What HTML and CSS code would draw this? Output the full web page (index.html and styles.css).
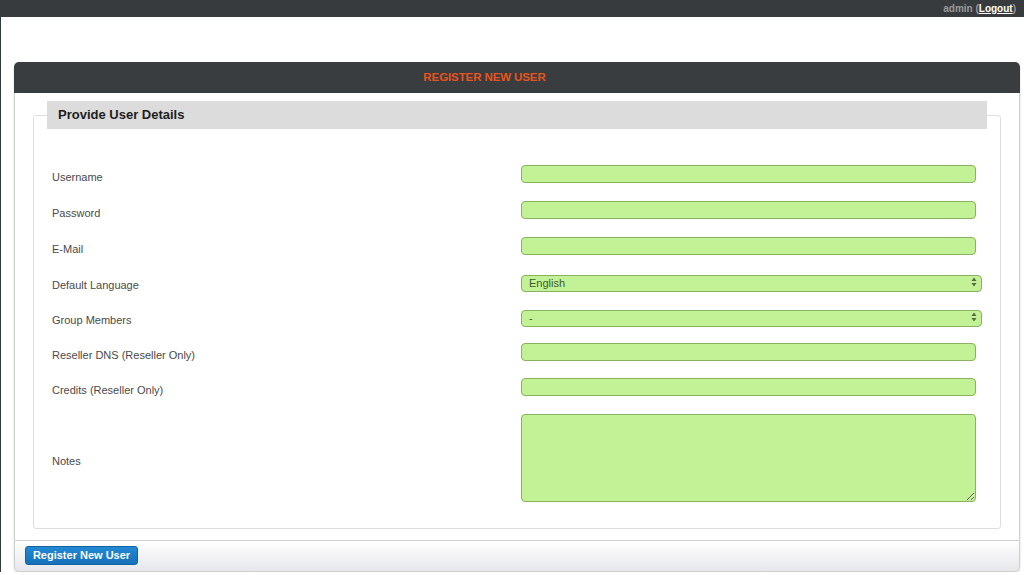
FILE: index.html
```html
<!DOCTYPE html>
<html lang="en">
<head>
  <meta charset="UTF-8">
  <meta name="viewport" content="width=device-width, initial-scale=1.0">
  <title>Register New User</title>
  <link rel="stylesheet" href="styles.css">
</head>
<body>

  <div class="topbar">
    <span class="user">admin (<a href="#">Logout</a>)</span>
  </div>

  <div class="page">
    <div class="panel">
      <div class="panel-head">REGISTER NEW USER</div>

      <div class="panel-body">
        <fieldset class="details">
          <legend>Provide User Details</legend>
          <div class="rows">
            <div class="row">
              <label>Username</label>
              <input type="text">
            </div>
            <div class="row">
              <label>Password</label>
              <input type="password">
            </div>
            <div class="row">
              <label>E-Mail</label>
              <input type="text">
            </div>
            <div class="row short">
              <label>Default Language</label>
              <div class="select-wrap">
                <select>
                  <option>English</option>
                </select>
                <svg class="arrows" width="6" height="10" viewBox="0 0 6 10"><path d="M3 0.5 L5.5 4 H0.5 Z M3 9.5 L5.5 6 H0.5 Z" fill="#556b44"/></svg>
              </div>
            </div>
            <div class="row short">
              <label>Group Members</label>
              <div class="select-wrap">
                <select>
                  <option>-</option>
                </select>
                <svg class="arrows" width="6" height="10" viewBox="0 0 6 10"><path d="M3 0.5 L5.5 4 H0.5 Z M3 9.5 L5.5 6 H0.5 Z" fill="#556b44"/></svg>
              </div>
            </div>
            <div class="row short">
              <label>Reseller DNS (Reseller Only)</label>
              <input type="text">
            </div>
            <div class="row">
              <label>Credits (Reseller Only)</label>
              <input type="text">
            </div>
            <div class="row notes">
              <label>Notes</label>
              <textarea></textarea>
            </div>
          </div>
        </fieldset>
      </div>

      <div class="panel-foot">
        <button>Register New User</button>
      </div>
    </div>
  </div>

</body>
</html>
```

FILE: styles.css
```css
body {
  font-family: "Liberation Sans", Arial, sans-serif;
  margin: 0;
  padding: 0;
  background-color: #fff;
}

.topbar {
  background-color: #383b3e;
  height: 17px;
  line-height: 17px;
  text-align: right;
  padding-right: 8px;
  font-size: 10px;
  font-weight: bold;
  color: #9a9a9a;
}

.topbar a {
  color: #fff;
  text-decoration: underline;
}

.page {
  border-left: 1px solid #2f3a40;
  padding-top: 45px;
  min-height: 513px;
  box-sizing: border-box;
}

.panel {
  margin-left: 13px;
  width: 1006px;
  border-radius: 5px;
  box-shadow: 0 1px 2px rgba(0, 0, 0, 0.2);
}

.panel-head {
  background-color: #3a3d40;
  height: 31px;
  line-height: 31px;
  border-radius: 5px 5px 0 0;
  text-align: center;
  padding-right: 65px;
  font-size: 11.5px;
  font-weight: bold;
  color: #e8541c;
  letter-spacing: -0.1px;
}

.panel-body {
  background-color: #fff;
  border-left: 1px solid #cfcfcf;
  border-right: 1px solid #cfcfcf;
  padding: 8px 0 11px;
}

.details {
  margin: 0 18px;
  padding: 0 13px;
  border: 1px solid #dedede;
  border-radius: 3px;
  min-width: 0;
}

.details legend {
  width: 100%;
  box-sizing: border-box;
  background-color: #dcdcdc;
  padding: 6px 11px;
  line-height: 16px;
  font-size: 13px;
  font-weight: bold;
  color: #1e1e1e;
}

.rows {
  padding: 27px 0 26px;
}

.row {
  display: flex;
  align-items: center;
  height: 36px;
}

.row.short {
  height: 35px;
}

.row label {
  width: 469px;
  padding: 6px 0 0 5px;
  font-size: 11px;
  line-height: 14px;
  color: #4a4a4a;
}

.row input,
.row select,
.row textarea {
  box-sizing: border-box;
  background-color: #c2f196;
  border: 1px solid #88b25f;
  border-radius: 4px;
  font-family: "Liberation Sans", Arial, sans-serif;
  font-size: 11px;
  color: #3f5a2c;
  outline: none;
}

.row input {
  width: 455px;
  height: 18px;
  padding: 0 6px;
}

.select-wrap {
  position: relative;
  width: 461px;
  height: 17px;
}

.select-wrap select {
  appearance: none;
  -webkit-appearance: none;
  width: 100%;
  height: 17px;
  padding: 0 7px;
  line-height: 15px;
}

.select-wrap .arrows {
  position: absolute;
  right: 5px;
  top: 4px;
}

.row.notes {
  height: auto;
  padding-top: 9px;
}

.row textarea {
  width: 455px;
  height: 88px;
  padding: 4px 6px;
}

.panel-foot {
  border: 1px solid #cfcfcf;
  border-radius: 0 0 5px 5px;
  background: linear-gradient(#ffffff, #e6e7ec);
  padding: 4px 10px 6px;
}

.panel-foot button {
  height: 19px;
  width: 113px;
  padding: 0;
  background: linear-gradient(#2389d3, #1570bb);
  border: 1px solid #12639f;
  border-radius: 3px;
  color: #fff;
  font-family: "Liberation Sans", Arial, sans-serif;
  font-size: 11px;
  font-weight: bold;
  cursor: pointer;
}

.panel-foot button:hover {
  background: #1570bb;
}
```
